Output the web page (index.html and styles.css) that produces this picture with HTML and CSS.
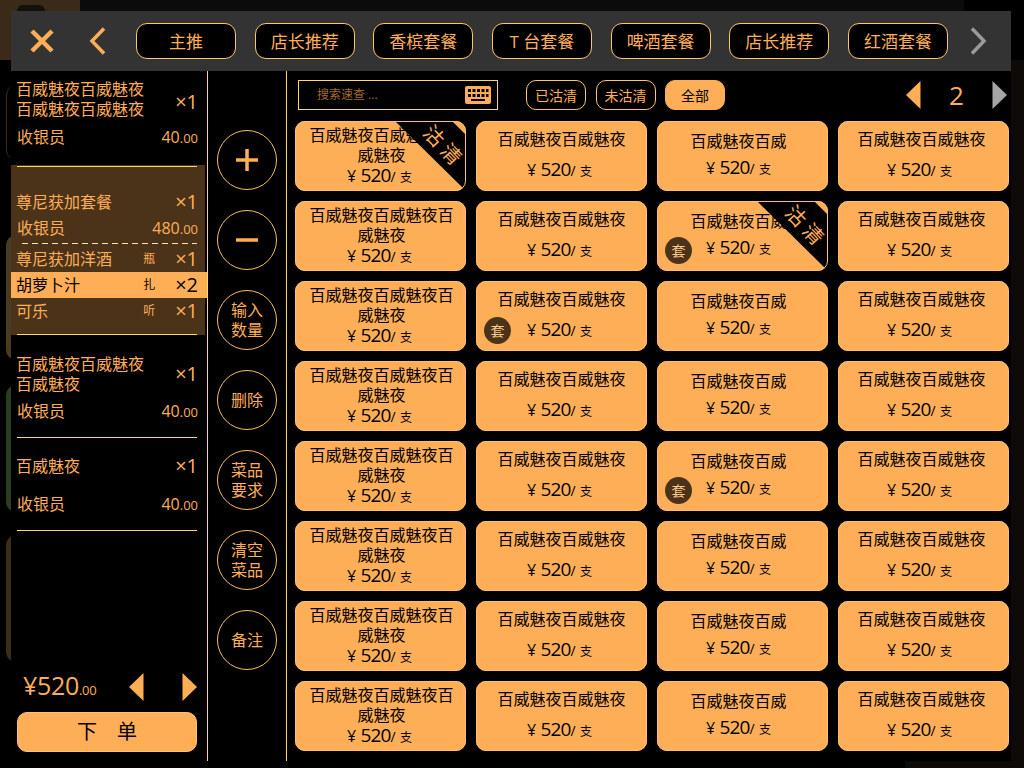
FILE: index.html
```html
<!DOCTYPE html>
<html lang="zh-CN">
<head>
<meta charset="utf-8">
<title>点餐</title>
<link rel="stylesheet" href="styles.css">
</head>
<body>
<div class="screen">
  <div class="backdrop">
    <i class="bg bg-tl"></i><i class="bg bg-mark"></i><i class="bg bg-top"></i><i class="bg bg-right"></i><i class="bg bg-bottom"></i>
    <i class="bg pill pill-a"></i><i class="bg pill pill-b"></i><i class="bg pill pill-c"></i><i class="bg pill pill-d"></i>
  </div>
  <div class="panel">
    <header class="topbar">
      <svg class="ico-x" viewBox="0 0 24 24" width="24" height="24"><path d="M2 2 22 22M22 2 2 22" fill="none" stroke="#ffae58" stroke-width="4.5"/></svg>
      <svg class="ico-back" viewBox="0 0 17 28" width="17" height="28"><path d="M15 1.500 3 14 15 26.500" fill="none" stroke="#ffae58" stroke-width="3.500"/></svg>
      <nav class="tabs">
        <span class="tab">主推</span><span class="tab">店长推荐</span><span class="tab">香槟套餐</span><span class="tab">T 台套餐</span><span class="tab">啤酒套餐</span><span class="tab">店长推荐</span><span class="tab">红酒套餐</span>
      </nav>
      <svg class="ico-next" viewBox="0 0 17 28" width="17" height="28"><path d="M2 1.500 14 14 2 26.500" fill="none" stroke="#9a9a9a" stroke-width="3.500"/></svg>
    </header>
    <div class="body">
      <aside class="order">
        <div class="orders">
          <div class="item item-1">
            <div class="row"><div class="name">百威魅夜百威魅夜<br>百威魅夜百威魅夜</div><span class="qty">×1</span></div>
            <div class="row staff"><span>收银员</span><span class="money">40<small>.00</small></span></div>
          </div>
          <div class="divider"></div>
          <div class="group">
            <div class="row set-title"><div class="name">尊尼获加套餐</div><span class="qty">×1</span></div>
            <div class="row staff set-staff"><span>收银员</span><span class="money">480<small>.00</small></span></div>
            <div class="dash"></div>
            <div class="sub"><span class="sub-name">尊尼获加洋酒</span><span class="unit">瓶</span><span class="qty">×1</span></div>
            <div class="sub active"><span class="sub-name">胡萝卜汁</span><span class="unit">扎</span><span class="qty">×2</span></div>
            <div class="sub"><span class="sub-name">可乐</span><span class="unit">听</span><span class="qty">×1</span></div>
          </div>
          <div class="divider"></div>
          <div class="item item-3">
            <div class="row"><div class="name">百威魅夜百威魅夜<br>百威魅夜</div><span class="qty">×1</span></div>
            <div class="row staff"><span>收银员</span><span class="money">40<small>.00</small></span></div>
          </div>
          <div class="divider"></div>
          <div class="item item-4">
            <div class="row"><div class="name">百威魅夜</div><span class="qty">×1</span></div>
            <div class="row staff"><span>收银员</span><span class="money">40<small>.00</small></span></div>
          </div>
          <div class="divider"></div>
        </div>
        <div class="total-row">
          <div class="total">¥520<small>.00</small></div>
          <div class="total-pager">
            <svg viewBox="0 0 15 28" width="15" height="28"><path d="M14.500 0 0 14 14.500 28Z" fill="#ffae58"/></svg>
            <svg viewBox="0 0 15 28" width="15" height="28"><path d="M.5 0 15 14 .5 28Z" fill="#ffae58"/></svg>
          </div>
        </div>
        <button class="submit">下　单</button>
      </aside>
      <div class="actions">
        <div class="circle"><svg viewBox="0 0 24 24" width="24" height="24"><path d="M12 1V23M1 12H23" stroke="#ffae58" stroke-width="3.500" fill="none"/></svg></div>
        <div class="circle"><svg viewBox="0 0 24 24" width="24" height="24"><path d="M1 12H23" stroke="#ffae58" stroke-width="3.500" fill="none"/></svg></div>
        <div class="circle">输入<br>数量</div>
        <div class="circle">删除</div>
        <div class="circle">菜品<br>要求</div>
        <div class="circle">清空<br>菜品</div>
        <div class="circle">备注</div>
      </div>
      <main class="menu">
        <div class="toolbar">
          <div class="search"><span class="placeholder">搜索速查 ...</span>
            <svg class="kbd" viewBox="0 0 26 18" width="26" height="18"><rect width="26" height="18" rx="2" fill="#ffae58"/><g fill="#000"><rect x="3" y="3" width="3" height="3"/><rect x="7.500" y="3" width="3" height="3"/><rect x="12" y="3" width="3" height="3"/><rect x="16.500" y="3" width="3" height="3"/><rect x="21" y="3" width="2.500" height="3"/><rect x="3" y="8" width="3" height="3"/><rect x="7.500" y="8" width="3" height="3"/><rect x="12" y="8" width="3" height="3"/><rect x="16.500" y="8" width="3" height="3"/><rect x="21" y="8" width="2.500" height="3"/><rect x="6" y="13" width="14" height="2"/></g></svg>
          </div>
          <div class="filters"><span class="filter">已沽清</span><span class="filter">未沽清</span><span class="filter on">全部</span></div>
          <div class="pager">
            <svg viewBox="0 0 15 28" width="15" height="28"><path d="M14.500 0 0 14 14.500 28Z" fill="#ffae58"/></svg>
            <span class="page">2</span>
            <svg viewBox="0 0 15 28" width="15" height="28"><path d="M.5 0 15 14 .5 28Z" fill="#a6a6a6"/></svg>
          </div>
        </div>
        <div class="grid">
          <div class="card a sold"><div class="title">百威魅夜百威魅夜百威魅夜</div><div class="price"><i>¥</i> 520<b>/</b> <u>支</u></div><div class="ribbon"></div><span class="ribbon-text">沽清</span></div>
          <div class="card b"><div class="title">百威魅夜百威魅夜</div><div class="price"><i>¥</i> 520<b>/</b> <u>支</u></div></div>
          <div class="card c"><div class="title">百威魅夜百威</div><div class="price"><i>¥</i> 520<b>/</b> <u>支</u></div></div>
          <div class="card d"><div class="title">百威魅夜百威魅夜</div><div class="price"><i>¥</i> 520<b>/</b> <u>支</u></div></div>

          <div class="card a"><div class="title">百威魅夜百威魅夜百威魅夜</div><div class="price"><i>¥</i> 520<b>/</b> <u>支</u></div></div>
          <div class="card b"><div class="title">百威魅夜百威魅夜</div><div class="price"><i>¥</i> 520<b>/</b> <u>支</u></div></div>
          <div class="card c sold"><div class="title">百威魅夜百威</div><div class="price"><i>¥</i> 520<b>/</b> <u>支</u></div><span class="badge">套</span><div class="ribbon"></div><span class="ribbon-text">沽清</span></div>
          <div class="card d"><div class="title">百威魅夜百威魅夜</div><div class="price"><i>¥</i> 520<b>/</b> <u>支</u></div></div>

          <div class="card a"><div class="title">百威魅夜百威魅夜百威魅夜</div><div class="price"><i>¥</i> 520<b>/</b> <u>支</u></div></div>
          <div class="card b"><div class="title">百威魅夜百威魅夜</div><div class="price"><i>¥</i> 520<b>/</b> <u>支</u></div><span class="badge">套</span></div>
          <div class="card c"><div class="title">百威魅夜百威</div><div class="price"><i>¥</i> 520<b>/</b> <u>支</u></div></div>
          <div class="card d"><div class="title">百威魅夜百威魅夜</div><div class="price"><i>¥</i> 520<b>/</b> <u>支</u></div></div>

          <div class="card a"><div class="title">百威魅夜百威魅夜百威魅夜</div><div class="price"><i>¥</i> 520<b>/</b> <u>支</u></div></div>
          <div class="card b"><div class="title">百威魅夜百威魅夜</div><div class="price"><i>¥</i> 520<b>/</b> <u>支</u></div></div>
          <div class="card c"><div class="title">百威魅夜百威</div><div class="price"><i>¥</i> 520<b>/</b> <u>支</u></div></div>
          <div class="card d"><div class="title">百威魅夜百威魅夜</div><div class="price"><i>¥</i> 520<b>/</b> <u>支</u></div></div>

          <div class="card a"><div class="title">百威魅夜百威魅夜百威魅夜</div><div class="price"><i>¥</i> 520<b>/</b> <u>支</u></div></div>
          <div class="card b"><div class="title">百威魅夜百威魅夜</div><div class="price"><i>¥</i> 520<b>/</b> <u>支</u></div></div>
          <div class="card c"><div class="title">百威魅夜百威</div><div class="price"><i>¥</i> 520<b>/</b> <u>支</u></div><span class="badge">套</span></div>
          <div class="card d"><div class="title">百威魅夜百威魅夜</div><div class="price"><i>¥</i> 520<b>/</b> <u>支</u></div></div>

          <div class="card a"><div class="title">百威魅夜百威魅夜百威魅夜</div><div class="price"><i>¥</i> 520<b>/</b> <u>支</u></div></div>
          <div class="card b"><div class="title">百威魅夜百威魅夜</div><div class="price"><i>¥</i> 520<b>/</b> <u>支</u></div></div>
          <div class="card c"><div class="title">百威魅夜百威</div><div class="price"><i>¥</i> 520<b>/</b> <u>支</u></div></div>
          <div class="card d"><div class="title">百威魅夜百威魅夜</div><div class="price"><i>¥</i> 520<b>/</b> <u>支</u></div></div>

          <div class="card a"><div class="title">百威魅夜百威魅夜百威魅夜</div><div class="price"><i>¥</i> 520<b>/</b> <u>支</u></div></div>
          <div class="card b"><div class="title">百威魅夜百威魅夜</div><div class="price"><i>¥</i> 520<b>/</b> <u>支</u></div></div>
          <div class="card c"><div class="title">百威魅夜百威</div><div class="price"><i>¥</i> 520<b>/</b> <u>支</u></div></div>
          <div class="card d"><div class="title">百威魅夜百威魅夜</div><div class="price"><i>¥</i> 520<b>/</b> <u>支</u></div></div>

          <div class="card a"><div class="title">百威魅夜百威魅夜百威魅夜</div><div class="price"><i>¥</i> 520<b>/</b> <u>支</u></div></div>
          <div class="card b"><div class="title">百威魅夜百威魅夜</div><div class="price"><i>¥</i> 520<b>/</b> <u>支</u></div></div>
          <div class="card c"><div class="title">百威魅夜百威</div><div class="price"><i>¥</i> 520<b>/</b> <u>支</u></div></div>
          <div class="card d"><div class="title">百威魅夜百威魅夜</div><div class="price"><i>¥</i> 520<b>/</b> <u>支</u></div></div>
        </div>
      </main>
    </div>
  </div>
</div>
</body>
</html>
```
FILE: styles.css
```css
* { box-sizing: border-box; }
html, body { margin: 0; padding: 0; background: #000; }
body {
  width: 1024px; height: 768px; overflow: hidden;
  font-family: "Open Sans", "Noto Sans CJK SC", sans-serif;
  font-size: 16px; color: #ffae58;
}
.screen { position: relative; width: 1024px; height: 768px; padding: 11px 0 0 11px; }

.backdrop { position: absolute; inset: 0; }
.bg { position: absolute; display: block; }
.bg-tl { left: 0; top: 0; width: 80px; height: 60px; background: #3a2a17; }
.bg-mark { left: 17px; top: 5px; width: 28px; height: 6px; background: #14100a; border-radius: 8px 8px 0 0; }
.bg-top { left: 80px; top: 0; width: 884px; height: 11px; background: #0b0b0b; }
.bg-right { left: 1011px; top: 60px; width: 13px; height: 708px; background: #0d0a07; }
.bg-bottom { left: 905px; top: 761px; width: 106px; height: 7px; background: #0d0a07; }
.pill { left: 6px; width: 10px; border-radius: 10px 0 0 10px; }
.pill-a { top: 85px; height: 75px; border-left: 1px solid #3a2a17; }
.pill-b { top: 235px; height: 125px; background: #4a3a20; }
.pill-c { top: 385px; height: 127px; background: #2a3d1e; }
.pill-d { top: 535px; height: 127px; background: #3a2e1a; }

.panel { position: relative; width: 1000px; height: 750px; background: #000; display: flex; flex-direction: column; }

.topbar { height: 60px; background: #333; display: flex; align-items: center; flex: none; }
.ico-x { margin-left: 19px; flex: none; }
.ico-back { margin-left: 35px; flex: none; }
.tabs { display: flex; gap: 18.67px; margin-left: 30px; flex: none; }
.tab {
  width: 100px; height: 36px; border: 1px solid #ffc56e; border-radius: 11px; background: #000;
  display: flex; align-items: center; justify-content: center; line-height: 1; font-size: 17px;
}
.ico-next { margin-left: 22px; flex: none; }

.body { flex: 1; display: flex; min-height: 0; }

.order { width: 197px; flex: none; border-right: 1px solid #ffd966; display: flex; flex-direction: column; padding-bottom: 9px; }
.orders { flex: 1; display: flex; flex-direction: column; }
.row { display: flex; align-items: center; justify-content: space-between; padding: 0 9px 0 5px; }
.name { line-height: 20px; }
.qty { font-size: 20px; line-height: 26px; flex: none; }
.staff { line-height: 20px; }
.staff span:first-child { padding-left: 1px; }
.money { font-size: 16px; line-height: 20px; position: relative; top: 1px; }
.money small { font-size: 13px; }
.item-1 { height: 95px; padding-top: 8px; }
.item-1 .qty { padding-top: 6px; }
.item-1 .staff { margin-top: 7px; }
.item-3 { height: 102px; padding-top: 19px; }
.item-3 .staff { margin-top: 6px; }
.item-4 { height: 92px; padding-top: 15px; }
.item-4 .staff { margin-top: 14px; }
.divider { height: 1px; background: #ffd966; margin: 0 10px 0 6px; flex: none; position: relative; z-index: 1; }

.group { margin: -2px 2px -1px 0; height: 170px; background: #4a3319; padding-top: 24px; }
.set-title { height: 26px; padding-right: 7px; }
.set-staff { margin-top: 2px; padding-right: 7px; }
.dash {
  margin: 5px 8px 2px 11px; height: 1px;
  background: repeating-linear-gradient(90deg, #ffe2ae 0 6px, transparent 6px 10px);
}
.sub { display: flex; align-items: center; height: 26px; line-height: 26px; padding: 0 9px 0 5px; margin-right: -2px; }
.sub-name { flex: 1; }
.unit { font-size: 12px; width: 32px; }
.active { background: #ffae58; color: #000; }

.total-row { display: flex; align-items: center; justify-content: space-between; height: 30px; padding: 0 10px 0 12px; }
.total { font-size: 25px; line-height: 30px; letter-spacing: -0.3px; }
.total small { font-size: 13px; }
.total-pager { display: flex; gap: 38px; }
.submit {
  margin: 10px 10px 0 6px; height: 40px; flex: none; border: 1px solid #ffc56e; border-radius: 10px;
  background: #ffae58; color: #000; font: inherit; font-size: 20px; line-height: 1;
}

.actions { flex: none; display: flex; flex-direction: column; align-items: center; gap: 20px; padding-top: 59px; border-right: 1px solid #ffd966; width: 79px; }
.circle {
  width: 60px; height: 60px; border: 1px solid #ffbb62; border-radius: 50%; flex: none;
  display: flex; align-items: center; justify-content: center; text-align: center; line-height: 20px;
}

.menu { flex: 1; min-width: 0; padding: 9px 0 0 8px; }
.toolbar { height: 30px; display: flex; align-items: center; position: relative; }
.search {
  width: 200px; height: 30px; margin-left: 3px; border: 1px solid #ffd966; display: flex; align-items: center;
  justify-content: space-between; padding: 0 6px 0 18px; flex: none;
}
.placeholder { font-size: 12px; color: #a06c2f; padding-bottom: 2px; }
.filters { display: flex; gap: 9.5px; margin-left: 28px; }
.filter {
  width: 60px; height: 30px; border: 1px solid #ffc56e; border-radius: 10px; font-size: 14px;
  display: flex; align-items: center; justify-content: center;
}
.filter.on { background: #ffae58; color: #000; border-color: #ffae58; }
.pager { display: flex; align-items: center; margin-left: auto; margin-right: 4px; }
.page { width: 71px; text-align: center; font-size: 26px; line-height: 30px; }

.grid { margin-top: 11px; display: grid; grid-template-columns: repeat(4, 171px); grid-auto-rows: 70px; gap: 10px; }
.card { position: relative; background: #ffae58; border-radius: 10px; color: #000; text-align: center; line-height: 20px; }
.card::after { content: ""; position: absolute; inset: 0; border: 1px solid #ffc06e; border-radius: 10px; }
.card.a { padding: 4px 11px 0 13px; }
.card.b { padding-top: 8px; }
.card.b .price { margin-top: 10px; }
.card.c { padding: 10px 8px 0 0; }
.card.c .price { margin-top: 6px; }
.card.d { padding: 8px 4px 0 0; }
.card.d .price { margin-top: 10px; }
.price { font-size: 19px; line-height: 20px; letter-spacing: -0.8px; white-space: nowrap; padding-right: 4px; }
.card.c .price { padding-right: 0; }
.price i { font-style: normal; font-size: 16px; letter-spacing: 0; }
.price b { font-weight: 400; font-size: 14px; letter-spacing: 0; }
.price u { text-decoration: none; font-size: 12px; letter-spacing: 0; }
.badge {
  position: absolute; left: 8px; top: 36px; width: 27px; height: 27px; border-radius: 50%;
  background: #4a3319; color: #ffc98a; font-size: 14px; line-height: 27px;
}
.ribbon {
  position: absolute; inset: 0; background: #000;
  clip-path: polygon(100px 0, 157px 0, 171px 14px, 171px 70px);
}
.ribbon-text {
  position: absolute; left: 124px; top: 16px; width: 50px; color: #ffae58; z-index: 1;
  font-size: 20px; line-height: 20px; letter-spacing: 5px; transform: rotate(47deg); white-space: nowrap;
}
```
